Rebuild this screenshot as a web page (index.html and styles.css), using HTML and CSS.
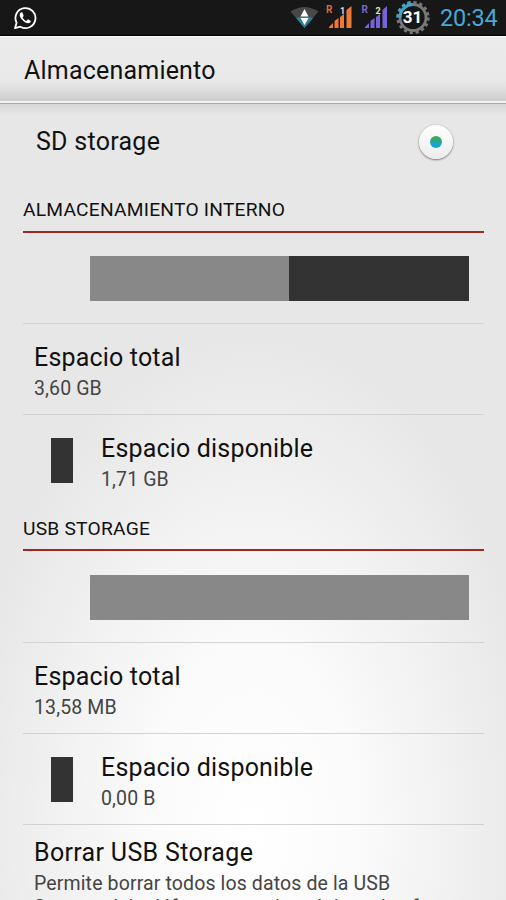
FILE: index.html
```html
<!DOCTYPE html>
<html lang="es">
<head>
<meta charset="utf-8">
<title>Almacenamiento</title>
<link rel="stylesheet" href="styles.css">
</head>
<body>
<div class="screen">
  <header class="status">
    <svg class="whatsapp" width="24" height="24" viewBox="0 0 24 24">
      <path d="M2 22.2 3.6 16.7A10 10 0 1 1 7.4 20.7Z" fill="none" stroke="#fff" stroke-width="1.800" stroke-linejoin="round"/>
      <path d="M8.500 6.200c-.5 0-1.800 1-1.800 2.800 0 3.400 5 8.200 8.500 8.200 1.500 0 2.700-1.200 2.700-2.300l-3-1.600-1.500 1.600c-1.600-.5-3.200-2.200-3.800-3.500l1.100-1.500-1.200-3.400z" fill="#fff"/>
    </svg>
    <svg class="icons" width="145" height="35" viewBox="289 0 145 35">
      <path d="M290.500 11.500Q304.500 2.500 318.500 11.500L304.500 28Z" fill="#484848"/>
      <path d="M296 18q8.500-3 17 0L304.500 28Z" fill="#2f7f98"/>
      <path d="M304.500 9l4 7.500h-8zM304.500 25l-4-7h8z" fill="#fff"/>
      <g fill="#ee7838"><path d="M329 28v-1l4-4v5zM334.500 28v-7l4-3v10zM340 28V17l4-3v14zM346.500 28V10l5-4v22z"/></g>
      <g fill="#7564d8"><path d="M365 28v-1l4-4v5zM370.500 28v-7l4-3v10zM376 28V17l4-3v14zM382.500 28V10l4.500-4v22z"/></g>
      <text class="sim" x="326" y="13" fill="#d96c35">R</text>
      <text class="sim" x="361.500" y="13" fill="#7466cc">R</text>
      <text class="num" x="340" y="13.500" fill="#e0dcd4">1</text>
      <text class="num" x="375.500" y="13.500" fill="#e4e8b0">2</text>
      <circle cx="413" cy="17.500" r="15.300" fill="none" stroke="#787878" stroke-width="2.600" stroke-dasharray="3.200 2.808"/>
      <circle cx="413" cy="17.500" r="13" fill="none" stroke="#787878" stroke-width="2.800"/>
      <path d="M400 17.500A13 13 0 0 1 413 4.500" fill="none" stroke="#3fa4ca" stroke-width="2.800"/>
      <path d="M397.700 17.500A15.300 15.300 0 0 1 413 2.200" fill="none" stroke="#3fa4ca" stroke-width="2.600" stroke-dasharray="3.200 2.808"/>
      <text class="battery" x="412.500" y="23" text-anchor="middle" fill="#fff">31</text>
    </svg>
    <span class="clock">20:34</span>
  </header>
  <div class="titlebar"><h1>Almacenamiento</h1></div>
  <main>
    <div class="sd"><span class="label">SD storage</span><span class="radio"><i></i></span></div>
    <section class="internal">
      <h2>ALMACENAMIENTO INTERNO</h2>
      <div class="usage"><div class="bar"><div class="used" style="width:52.600%"></div></div></div>
      <div class="row"><div><p class="label">Espacio total</p><p class="value">3,60 GB</p></div></div>
      <div class="row"><span class="swatch"></span><div><p class="label">Espacio disponible</p><p class="value">1,71 GB</p></div></div>
    </section>
    <section class="usb">
      <h2>USB STORAGE</h2>
      <div class="usage"><div class="bar"><div class="used" style="width:100%"></div></div></div>
      <div class="row"><div><p class="label">Espacio total</p><p class="value">13,58 MB</p></div></div>
      <div class="row"><span class="swatch"></span><div><p class="label">Espacio disponible</p><p class="value">0,00 B</p></div></div>
      <div class="row erase"><div><p class="label">Borrar USB Storage</p><p class="value desc">Permite borrar todos los datos de la USB<br>Storage del teléfono, como la música o las fotos.</p></div></div>
    </section>
  </main>
</div>
</body>
</html>
```
FILE: styles.css
```css
* { box-sizing: border-box; margin: 0; padding: 0; }
body { width: 506px; height: 900px; overflow: hidden; font-family: Roboto, sans-serif; color: #111; }
.screen { height: 900px; overflow: hidden; background: radial-gradient(ellipse 290px 500px at 253px 830px, #fff 0%, #fbfbfb 35%, #f1f1f1 68%, #e7e7e7 100%); }
.status { height: 36px; background: #171717; border-bottom: 1px solid #000; display: flex; align-items: center; padding-left: 13px; }
.whatsapp { margin-top: 1px; }
.icons { margin-left: 252px; }
.sim { font: bold 10px Roboto, sans-serif; }
.num { font: bold 9px Roboto, sans-serif; }
.battery { font: bold 17px Roboto, sans-serif; }
.clock { margin-left: 6px; padding-top: 2px; font-size: 23.500px; letter-spacing: -0.200px; line-height: 33px; color: #4aa8d4; white-space: nowrap; }
.titlebar { height: 68px; padding-left: 24px; border-top: 1px solid #fff; border-bottom: 1px solid #a8a8a8; background: linear-gradient(#ebebeb 0, #e9e9e9 65%, #dedede 80%, #cdcdcd 96%, #f4f4f4 98%); }
h1 { font-size: 25px; font-weight: 400; line-height: 68px; letter-spacing: 0.200px; }
main { padding: 0 22.500px 0 23px; background: linear-gradient(#d8d8d8, rgba(231,231,231,0) 12px); }
.sd { height: 84px; padding: 0 30.500px 8px 13px; display: flex; align-items: center; justify-content: space-between; }
.label { font-size: 25px; line-height: 30px; letter-spacing: 0.180px; color: #111; white-space: nowrap; }
.sd .label { letter-spacing: 0.280px; }
.radio { width: 34px; height: 34px; border-radius: 50%; display: flex; align-items: center; justify-content: center; background: linear-gradient(#fff, #ececec); box-shadow: 0 1px 2px #777, 0 0 2px #bbb; }
.radio i { width: 12px; height: 12px; border-radius: 50%; background: linear-gradient(#3aa85c 20%, #16a4d8 75%); }
h2 { height: 45px; border-bottom: 2px solid #a1281f; font-size: 19.200px; font-weight: 400; line-height: 43px; letter-spacing: 0.230px; white-space: nowrap; }
.usage { height: 90px; padding: 23px 14.500px 0 67px; }
.internal { height: 318px; }
.usb h2 { line-height: 45px; }
.usb .usage { height: 91px; padding-top: 24px; }
.bar { height: 45px; background: #333; }
.used { height: 45px; background: #888; }
.row { height: 91px; border-top: 1px solid #d2d2d2; padding: 19px 0 0 11px; display: flex; }
.swatch { width: 22px; height: 45px; margin: 4px 28px 0 17px; background: #333; }
.value { font-size: 19.500px; line-height: 31px; letter-spacing: 0.130px; color: #444; white-space: nowrap; }
.erase { padding-top: 13px; }
.erase .label { letter-spacing: 0.330px; }
.desc { line-height: 24px; padding-top: 3.500px; }
```
